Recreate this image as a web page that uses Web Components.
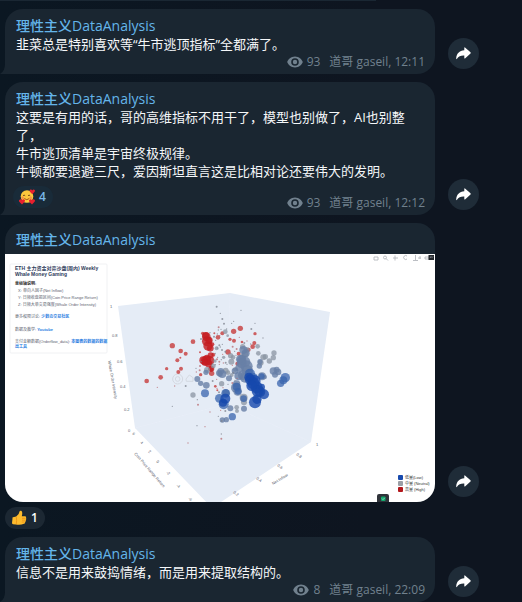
<!DOCTYPE html>
<html lang="zh-CN">
<head>
<meta charset="utf-8">
<meta name="viewport" content="width=device-width, initial-scale=1">
<title>理性主义DataAnalysis</title>
<style>
  body {
    margin: 0;
    background: #0e1520;
    color: #f5f7f9;
    font: 13px/18px "Open Sans", "Noto Sans CJK SC", sans-serif;
  }
</style>
</head>
<body>
<chat-feed>
  <chat-message author="理性主义DataAnalysis" views="93" sign="道哥 gaseil" time="12:11">韭菜总是特别喜欢等“牛市逃顶指标”全都满了。</chat-message>
  <chat-message author="理性主义DataAnalysis" views="93" sign="道哥 gaseil" time="12:12">这要是有用的话，哥的高维指标不用干了，模型也别做了，AI也别整了，<br>牛市逃顶清单是宇宙终极规律。<br>牛顿都要退避三尺，爱因斯坦直言这是比相对论还要伟大的发明。<chat-reaction slot="reaction" emoji="love" count="4"></chat-reaction></chat-message>
  <chat-message author="理性主义DataAnalysis" media><whale-plot slot="media"></whale-plot><chat-reaction slot="below" emoji="thumb" count="1"></chat-reaction></chat-message>
  <chat-message author="理性主义DataAnalysis" views="8" sign="道哥 gaseil" time="22:09">信息不是用来鼓捣情绪，而是用来提取结构的。</chat-message>
</chat-feed>

<script>
class ChatFeed extends HTMLElement {
  constructor() {
    super();
    this.attachShadow({ mode: 'open' }).innerHTML = `
      <style>
        :host {
          display: flex;
          flex-direction: column;
          gap: 8px;
          background: linear-gradient(90deg, #0b1722, #0e1520 70%);
        }
        .previous {
          width: 72%;
          height: 1px;
          background: #1a2733;
        }
      </style>
      <div class="previous"></div>
      <slot></slot>
    `;
  }
}

class ShareButton extends HTMLElement {
  constructor() {
    super();
    this.attachShadow({ mode: 'open' }).innerHTML = `
      <style>
        :host { display: block; flex: none; }
        button {
          display: grid;
          place-items: center;
          width: 31px;
          height: 31px;
          padding: 0;
          border: 0;
          border-radius: 50%;
          background: #1f2c38;
          cursor: pointer;
        }
        svg { display: block; }
      </style>
      <button type="button" aria-label="转发">
        <svg width="15" height="13" viewBox="0 0 15 13">
          <path fill="#fff" d="M8.3 .7Q8.3 0 9 .5L14.5 5.3Q15 6 14.5 6.6L9 11.4Q8.3 11.9 8.3 11.1V8.6C5 8.4 2.600 9.300 1 11.800Q.3 12.800 .2 11.400C.4 6.800 3.400 3.700 8.300 3.300Z"/>
        </svg>
      </button>
    `;
  }
}

class ChatReaction extends HTMLElement {
  connectedCallback() {
    const art = {
      love: `
        <circle cx="8" cy="7.500" r="6.300" fill="#fcc83c"/>
        <path d="M4 6.800q1-1.600 2.200 0M9 6.800q1-1.600 2.200 0" fill="none" stroke="#6b3f16" stroke-width=".9"/>
        <path d="M5.300 9.500q2.500 2.400 5 0" fill="none" stroke="#9c4a17" stroke-width=".9"/>
        <circle cx="3.600" cy="8.800" r="1.200" fill="#f78b4d"/><circle cx="11.800" cy="8.800" r="1.200" fill="#f78b4d"/>
        <path fill="#e8202e" d="M3 15.500L.3 12.700Q-.6 11 1 10.400 2.400 10 3 11.300 3.800 10 5.200 10.500 6.600 11.200 5.600 12.800Z"/>
        <path fill="#e8202e" d="M13 15.500l-2.700-2.800q-.9-1.700.7-2.300 1.400-.4 2 .9.800-1.300 2.200-.8 1.400.7.400 2.300Z"/>
        <path fill="#e8202e" d="M13.300 5.200l-2.400-2.500q-.8-1.600.6-2.100 1.200-.3 1.800.8.700-1.200 2-.7 1.200.6.300 2.100Z"/>`,
      thumb: `
        <path fill="#fdbb2d" d="M1.500 8.500Q1 7.500 2 7.200L5.200 6.600Q8.300 4.200 8.500 1.400 9 .3 10.200.8 12 2 10.800 6.200L14.300 6.300Q15.700 6.700 15 8 15.800 9 14.800 10 15.300 11.200 14.200 11.900 14.400 13.300 13 13.700 9 15.600 4.800 14.400L2 14.200Q1 14 1 13Z"/>
        <path fill="none" stroke="#e58a12" stroke-width=".7" d="M11 8.300h3.600M11 10.200h3.400M10.800 12h3M5.300 7Q6 10 5.300 14"/>`
    };
    this.attachShadow({ mode: 'open' }).innerHTML = `
      <style>
        :host { display: block; flex: none; }
        button {
          display: flex;
          align-items: center;
          gap: 4px;
          height: 22px;
          padding: 0 7px 0 6px;
          border: 0;
          border-radius: 11px;
          background: #192b39;
          color: #79b8ea;
          font: 600 12px/18px "Open Sans", sans-serif;
          cursor: pointer;
        }
        :host([slot="below"]) button {
          background: #1c2833;
          color: #fff;
        }
        svg { display: block; }
      </style>
      <button type="button">
        <svg width="16" height="16" viewBox="0 0 16 16">${art[this.getAttribute('emoji')]}</svg>
        <span>${this.getAttribute('count')}</span>
      </button>
    `;
  }
}

class ChatMessage extends HTMLElement {
  connectedCallback() {
    const author = this.getAttribute('author');
    const media = this.hasAttribute('media');
    const body = media ? '<slot name="media"></slot>' : `
      <div class="text"><slot></slot></div>
      <div class="foot">
        <slot name="reaction"></slot>
        <div class="meta">
          <svg width="16" height="12" viewBox="0 0 16 12">
            <path fill="#71818e" fill-rule="evenodd" d="M8 .5C12 .5 14.800 3.300 15.800 6 14.800 8.700 12 11.500 8 11.500S1.200 8.700.2 6C1.200 3.300 4 .5 8 .5ZM8 2.200A3.800 3.800 0 1 0 8 9.800 3.800 3.800 0 1 0 8 2.200ZM8 3.800A2.200 2.200 0 1 1 8 8.200 2.200 2.200 0 1 1 8 3.800Z"/>
          </svg>
          <span class="views">${this.getAttribute('views')}</span>
          <span>${this.getAttribute('sign')}, ${this.getAttribute('time')}</span>
        </div>
      </div>
      <svg class="tail" width="6" height="10" viewBox="0 0 6 10"><path fill="#1a2631" d="M6 0V10H0Q5 7 5 0Z"/></svg>`;
    this.attachShadow({ mode: 'open' }).innerHTML = `
      <style>
        :host {
          display: block;
          padding: 0 43px 0 5px;
        }
        .row {
          display: flex;
          align-items: flex-end;
          gap: 13px;
        }
        .bubble {
          position: relative;
          flex: 1;
          min-width: 0;
          box-sizing: border-box;
          padding: 8px 10px 3px 11px;
          border-radius: 18px 18px 18px 0;
          background: #1a2631;
        }
        .bubble.media {
          padding: 8px 0 0;
          border-radius: 18px;
          overflow: hidden;
        }
        .author {
          color: #64b5ea;
          font-size: 14px;
          font-weight: 500;
        }
        .media .author { padding: 0 11px 5px; }
        .foot {
          display: flex;
          align-items: flex-end;
          justify-content: space-between;
        }
        ::slotted([slot="reaction"]) { margin: 6px 0 4px -3px; }
        ::slotted([slot="below"]) { margin-top: 5px; width: max-content; }
        .meta {
          display: flex;
          align-items: center;
          margin-left: auto;
          color: #71818e;
          font-size: 12px;
        }
        .views { margin: 0 9px 0 4px; }
        .tail {
          position: absolute;
          left: -5px;
          bottom: 0;
        }
        share-button { margin-bottom: 5px; }
      </style>
      <div class="row">
        <div class="bubble${media ? ' media' : ''}">
          <div class="author">${author}</div>
          ${body}
        </div>
        <share-button></share-button>
      </div>
      <slot name="below"></slot>
    `;
  }
}

// [x, y, radius] in thirds of a plot unit, grouped by colour
const DOTS = [
  ['#c4302f', .75, [
    [50,333,7],[92,322,7],[110,296,5],[127,227,8],[152,243,7],[167,251,6],[142,271,6],[189,215,7],
    [145,306,6],[153,296,6],[331,175,8],[311,184,8],[264,202,7],[277,190,6],[300,208,5],[312,212,6],
    [294,246,8],[375,191,5],[373,219,6],[368,230,7],[356,239,6],[336,216,4],[250,254,6],[322,281,6],
    [326,251,6],[212,314,5],[256,349,4],[262,361,3],[210,247,3],[151,263,3],[253,190,3],[218,190,5],[244,296,9],[245,310,8]]],
  ['#c41c20', .8, [
    [229,200,13],[231,214,15],[234,228,14],[237,211,11],[227,196,10],[241,235,10],[220,271,12],
    [228,272,15],[239,272,14],[231,265,11],[236,281,11],[224,277,10],[242,256,9],[243,297,8],[247,223,6]]],
  ['#8994a2', .75, [
    [189,375,8],[286,185,7],[383,229,7],[432,249,8],[430,263,8],[400,262,9],[406,260,8],[418,273,8],
    [385,250,7],[392,278,9],[281,262,5],[302,257,8],[304,275,9],[309,262,7],[338,230,8],[350,240,9],
    [320,412,7],[321,423,6],[275,341,8],[287,302,9],[294,308,7],[260,235,6],[255,273,5],[250,288,7],
    [231,300,9],[305,315,6],[316,298,7],[341,383,12],[342,397,9],[293,197,4],[338,262,10],[345,253,10]]],
  ['#6880a6', .8, [
    [202,327,9],[229,346,10],[212,340,8],[228,307,8],[272,304,10],[277,312,12],[267,309,9],[297,325,9],
    [320,342,11],[318,353,15],[323,364,13],[288,369,11],[332,268,14],[340,240,12],[347,250,12],
    [329,293,13],[335,280,15],[345,275,16],[350,289,18],[352,302,17],[339,316,15],[326,318,13],
    [396,319,12],[404,321,7],[388,288,8],[390,275,8],[430,303,11],[440,299,9],[444,306,10],[342,416,9],
    [301,415,9],[277,450,8],[335,270,14],[345,323,15],[315,303,10],[435,314,9],[270,313,8],[289,449,8]]],
  ['#3864ad', .75, [
    [225,370,12],[268,385,13],[281,403,15],[287,370,13],[466,323,14],[460,331,12],[452,340,11],
    [307,440,11],[320,350,12],[324,364,10],[395,319,9],[360,311,15],[367,325,17],[341,386,10]]],
  ['#1749ad', .8, [
    [361,329,16],[370,340,18],[380,352,18],[390,365,16],[402,373,15],[374,333,18],[383,363,18],
    [375,397,18],[381,388,14],[357,322,14],[286,386,15],[279,398,12],[395,351,10],[365,347,16]]]
];

const SPECKS = [
  [260,110],[271,130],[333,121],[277,147],[305,160],[311,154],[282,161],[375,160],[399,204],[364,177],
  [265,180],[273,178],[252,200],[240,188],[257,211],[268,226],[271,231],[262,234],[276,240],[256,250],
  [263,262],[268,275],[274,269],[280,279],[287,278],[268,283],[291,283],[261,268],[248,280],[278,253],
  [286,245],[301,249],[314,244],[320,237],[277,223],[307,286],[310,308],[321,325],[256,284],[210,288],
  [214,275],[82,352],[167,348],[134,348],[127,409],[204,404],[202,389],[261,355],[267,367],[279,353],
  [294,343],[307,339],[315,331],[272,421],[286,423],[240,426],[274,492],[274,506],[201,467],[225,470],
  [275,453],[174,519],[265,439],[266,172],[290,177],[328,202],[213,207],[199,306],[198,295],[209,301],
  [362,222],[351,213],[343,219],[269,197],[262,192],[308,230],[318,256],[260,328],[248,333]
];

class WhalePlot extends HTMLElement {
  constructor() {
    super();
    const dots = DOTS.map(([fill, opacity, list]) =>
      `<g fill="${fill}" fill-opacity="${opacity}">` +
      list.map(([x, y, r]) => `<circle cx="${x}" cy="${y}" r="${r}"/>`).join('') + '</g>'
    ).join('');
    const specks = SPECKS.map(([x, y], i) =>
      `<circle cx="${x}" cy="${y}" r="${i % 3 ? 2 : 3}" fill="${i > 20 && i % 2 ? '#b86a70' : '#7d828d'}"/>`
    ).join('');
    this.attachShadow({ mode: 'open' }).innerHTML = `
      <style>
        :host { display: block; background: #fff; }
        svg { display: block; width: 100%; height: auto; }
        text { font-family: "Liberation Sans", "Noto Sans CJK SC", sans-serif; font-size: 4px; fill: #5c6370; }
        .title { font-size: 5px; font-weight: 700; fill: #2c3a5a; }
        .bold { font-weight: 700; fill: #333; }
        .legend { fill: #333; }
        a { fill: #2a7de1; font-weight: 700; }
        a text { fill: #2a7de1; }
      </style>
      <svg viewBox="0 0 430 248">
        <path fill="#e5ecf6" d="M113 52L225 39 325 58 306 188 207 254 130 174Z"/>
        <path fill="none" stroke="#e9eff8" stroke-width=".6" d="M225 39L222 150M222 150L130 174M222 150L306 188"/>

        <rect x="5" y="10" width="97" height="89" rx="1" fill="#fff" stroke="#f0f1f3" stroke-width="1"/>
        <text class="title" x="10" y="16">ETH 主力资金对弈沙盘(周内) Weekly</text>
        <text class="title" x="10" y="22">Whale Money Gaming</text>
        <text class="bold" x="10" y="31">坐标轴说明:</text>
        <text x="13" y="38">X: 单向人因子(Net Inflow)</text>
        <text x="13" y="45">Y: 日频收盘振区间(Coin Price Range Return)</text>
        <text x="13" y="52">Z: 日频大单交易强度(Whale Order Intensity)</text>
        <text x="10" y="64">更多权限讨论: <a href="#community">少数の交易社区</a></text>
        <text x="10" y="77">数据及教学: <a href="#youtube">Youtube</a></text>
        <text x="10" y="89">支付金额数据(Orderflow_data): <a href="#tools">本图表的数据的数据</a></text>
        <a href="#tools"><text x="10" y="94">出工具</text></a>

        <g>
          <text x="105" y="54">1</text>
          <text x="107" y="83">0.8</text>
          <text x="112" y="109">0.6</text>
          <text x="115" y="134">0.4</text>
          <text x="119" y="157">0.2</text>
          <text x="123" y="178">0</text>
          <text transform="translate(103 107) rotate(80)">Whale Order Intensity</text>
          <text transform="translate(127 180) rotate(40)">6</text>
          <text transform="translate(135 189) rotate(40)">4</text>
          <text transform="translate(143 198) rotate(40)">2</text>
          <text transform="translate(151 208) rotate(40)">0</text>
          <text transform="translate(161 219) rotate(40)">-2</text>
          <text transform="translate(171 232) rotate(40)">-4</text>
          <text transform="translate(183 245) rotate(40)">-6</text>
          <text transform="translate(129 200) rotate(49)">Coin Price Range Return</text>
          <text x="311" y="192">1</text>
          <text transform="translate(291 201) rotate(35)">0.8</text>
          <text transform="translate(272 212) rotate(35)">0.6</text>
          <text transform="translate(251 225) rotate(35)">0.4</text>
          <text transform="translate(228 239) rotate(35)">0.2</text>
          <text transform="translate(268 231) rotate(-31)">Net Inflow</text>
        </g>

        <g transform="translate(125 16) scale(.3333)">
          <g fill="none" stroke="#d3d8e0" stroke-width="3">
            <circle cx="143" cy="327" r="15"/><circle cx="143" cy="327" r="7"/>
            <path d="M168 327l10-12 11 8v11h-20z"/>
          </g>
          ${dots}
          <g opacity=".75">${specks}</g>
        </g>

        <g fill="none" stroke="#b4b8bd" stroke-width=".9">
          <path d="M369 3h4v3h-4zM388 4h5M390 1.500v5M408 6.500h5M410.500 1v5M420 3h4v2h-4z"/>
          <circle cx="380" cy="3.500" r="1.500"/><path d="M381 4.500l2 2"/>
          <path d="M402 2a2 2 0 1 0 0 3M413 4h3M415 2v3"/>
        </g>
        <rect x="423.500" y="1" width="5.500" height="5" fill="#24282d"/>
        <path d="M425 4l1-1.500 1 1 1-1" fill="none" stroke="#b9bec4" stroke-width=".6"/>

        <rect x="393" y="221" width="5" height="5" rx="1" fill="#1749ad"/>
        <rect x="393" y="227" width="5" height="5" rx="1" fill="#9a9ea5"/>
        <rect x="393" y="233" width="5" height="5" rx="1" fill="#b3171c"/>
        <text class="legend" x="400" y="225">低量(Low)</text>
        <text class="legend" x="400" y="231">中量 (Neutral)</text>
        <text class="legend" x="400" y="237">高量 (High)</text>

        <path fill="#30333a" d="M372 248V242Q372 240 374 240H382Q384 240 384 242V248Z"/>
        <rect x="376" y="242.500" width="4.500" height="4.500" rx="1" fill="#12a56b"/>
        <path d="M377 244.600l1 1 1.800-1.800" fill="none" stroke="#d8fff0" stroke-width=".6"/>
      </svg>
    `;
  }
}

customElements.define('share-button', ShareButton);
customElements.define('chat-reaction', ChatReaction);
customElements.define('whale-plot', WhalePlot);
customElements.define('chat-message', ChatMessage);
customElements.define('chat-feed', ChatFeed);
</script>
</body>
</html>
